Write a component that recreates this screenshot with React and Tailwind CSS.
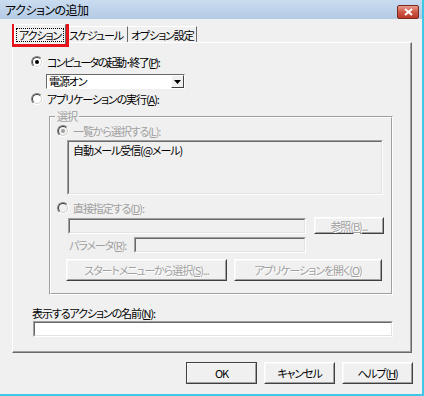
import React from 'react';

const font = { fontFamily: '"Noto Sans CJK JP", "Noto Sans", sans-serif' };

const Radio = ({ checked, disabled }) => (
  <span
    className={`relative inline-block h-[12px] w-[12px] shrink-0 rounded-full border border-t-[#808080] border-l-[#808080] border-r-white border-b-white ${
      disabled ? 'bg-[#f0f0f0]' : 'bg-white'
    }`}
  >
    <span className="absolute inset-0 rounded-full border border-t-[#404040] border-l-[#404040] border-r-[#d4d0c8] border-b-[#d4d0c8]" />
    {checked && (
      <span
        className={`absolute left-[3px] top-[3px] h-[4px] w-[4px] rounded-full ${
          disabled ? 'bg-[#a0a0a0]' : 'bg-black'
        }`}
      />
    )}
  </span>
);

const Sunken = ({ className = '', white, children }) => (
  <div
    className={`border border-t-[#a0a0a0] border-l-[#a0a0a0] border-r-white border-b-white ${className}`}
  >
    <div
      className={`h-full w-full border border-t-[#696969] border-l-[#696969] border-r-[#e3e3e3] border-b-[#e3e3e3] ${
        white ? 'bg-white' : 'bg-[#f0f0f0]'
      }`}
    >
      {children}
    </div>
  </div>
);

const Button = ({ className = '', disabled, isDefault, children }) => (
  <div
    className={`border ${
      isDefault ? 'border-[#404040]' : 'border-t-white border-l-white border-r-[#404040] border-b-[#404040]'
    } ${className}`}
  >
    <div className="flex h-full w-full items-center justify-center border border-t-[#f8f8f8] border-l-[#f8f8f8] border-r-[#a0a0a0] border-b-[#a0a0a0] bg-[#f0f0f0]">
      <span className={disabled ? 'text-[#a0a0a0] [text-shadow:1px_1px_0_#ffffff]' : 'text-black'}>{children}</span>
    </div>
  </div>
);

const U = ({ children }) => <span className="underline underline-offset-1">{children}</span>;

export default function App() {
  return (
    <div
      className="relative flex h-[396px] w-[424px] flex-col overflow-hidden whitespace-nowrap border-r-[2px] border-b-[2px] border-r-[#3fc7e8] border-b-[#3fc7e8] bg-[#f0f0f0] text-[11px] leading-[14px] tracking-[-1.1px] text-black [font-feature-settings:'palt']"
      style={font}
    >
      {/* title bar */}
      <div className="flex h-[19px] shrink-0 items-center justify-between bg-gradient-to-b from-[#c9dcf0] to-[#b4cbe5] pl-[5px] pr-[3px]">
        <span className="text-[12px] tracking-[-0.5px] text-black">アクションの追加</span>
        <div className="mt-[4px] flex h-[14px] w-[22px] items-center justify-center rounded-[2px] border border-[#7a2b20] bg-gradient-to-b from-[#e69a8c] via-[#cf5846] to-[#b8382a]">
          <svg width="9" height="8" viewBox="0 0 9 8">
            <path d="M1 1 L8 7 M8 1 L1 7" stroke="#fff" strokeWidth="2" />
          </svg>
        </div>
      </div>

      {/* tabs */}
      <div className="ml-[12px] mt-[6px] flex h-[18px] items-end">
        <div className="relative z-10 -mb-[1px] ml-[2px] flex h-[20px] w-[52px] items-center justify-center border border-b-0 border-t-white border-l-white border-r-[#696969] bg-[#f0f0f0]">
          <span className="border border-dotted border-black px-[2px] leading-[12px]">アクション</span>
        </div>
        <div className="flex h-[17px] items-center border-t border-r border-t-white border-r-[#696969] pl-[3px] pr-[4px]">
          スケジュール
        </div>
        <div className="flex h-[17px] items-center border-t border-r border-t-white border-r-[#696969] pl-[3px] pr-[2px]">
          オプション設定
        </div>
      </div>

      {/* tab panel */}
      <div className="ml-[12px] mt-[-1px] flex h-[311px] w-[400px] flex-col border border-t-white border-l-white border-r-[#696969] border-b-[#696969]">
        <div className="flex h-full flex-col border-r border-b border-r-[#a0a0a0] border-b-[#a0a0a0] pl-[18px]">
          <div className="mt-[12px] flex h-[14px] items-center gap-[4px]">
            <Radio checked />
            <span className="tracking-[-1.6px]">
              コンピュータの起動･終了(<U>P</U>):
            </span>
          </div>
          <div className="ml-[15px] mt-[5px] flex h-[15px] w-[139px] border border-t-[#696969] border-l-[#696969] border-r-white border-b-white bg-white">
            <span className="flex-1 pl-[2px] leading-[13px]">電源オン</span>
            <div className="flex w-[13px] items-center justify-center border border-t-white border-l-white border-r-[#404040] border-b-[#404040] bg-[#f0f0f0]">
              <svg width="7" height="4" viewBox="0 0 7 4">
                <path d="M0 0 H7 L3.5 4 Z" fill="#000" />
              </svg>
            </div>
          </div>
          <div className="mt-[3px] flex h-[14px] items-center gap-[4px]">
            <Radio />
            <span>
              アプリケーションの実行(<U>A</U>):
            </span>
          </div>

          {/* group box */}
          <div className="relative ml-[18px] mt-[10px] h-[179px] w-[344px] border border-t-[#a0a0a0] border-l-[#a0a0a0] border-r-white border-b-white">
            <div className="h-full w-full border border-t-white border-l-white border-r-[#a0a0a0] border-b-[#a0a0a0] pl-[6px] text-[#a0a0a0]">
              <span className="absolute left-[5px] top-[-8px] bg-[#f0f0f0] px-[2px]">選択</span>
              <div className="mt-[6px] flex h-[14px] items-center gap-[4px]">
                <Radio checked disabled />
                <span>
                  一覧から選択する(<U>L</U>):
                </span>
              </div>
              <Sunken className="ml-[10px] mt-[2px] h-[55px] w-[316px]">
                <div className="pl-[4px] pt-[1px] text-black">自動メール受信(@メール)</div>
              </Sunken>
              <div className="mt-[6px] flex h-[14px] items-center gap-[4px]">
                <Radio disabled />
                <span>
                  直接指定する(<U>D</U>):
                </span>
              </div>
              <div className="mt-[2px] flex items-start">
                <Sunken className="ml-[11px] mt-[1px] h-[16px] w-[238px]" />
                <Button disabled className="ml-[8px] h-[17px] w-[70px]">
                  参照(<U>B</U>)...
                </Button>
              </div>
              <div className="mt-[3px] flex items-center">
                <span className="ml-[12px] w-[65px]">
                  パラメータ(<U>R</U>):
                </span>
                <Sunken className="h-[16px] w-[172px]" />
              </div>
              <div className="mt-[6px] flex gap-[7px]">
                <Button disabled className="ml-[9px] h-[22px] w-[161px]">
                  スタートメニューから選択(<U>S</U>)...
                </Button>
                <Button disabled className="h-[22px] w-[148px]">
                  アプリケーションを開く(<U>O</U>)
                </Button>
              </div>
            </div>
          </div>

          <div className="mt-[11px] flex h-[14px] items-center pl-[1px]">
            表示するアクションの名前(<U>N</U>):
          </div>
          <Sunken white className="ml-[2px] mt-[1px] h-[16px] w-[360px]" />
        </div>
      </div>

      {/* bottom buttons */}
      <div className="ml-[186px] mt-[9px] flex gap-[7px]">
        <Button isDefault className="h-[22px] w-[71px]">
          OK
        </Button>
        <Button className="h-[22px] w-[71px]">キャンセル</Button>
        <Button className="h-[22px] w-[71px]">
          ヘルプ(<U>H</U>)
        </Button>
      </div>

      {/* red annotation */}
      <div className="pointer-events-none absolute left-[12px] top-[24px] h-[23px] w-[57px] border-[3px] border-[#e8141b]" />
    </div>
  );
}
